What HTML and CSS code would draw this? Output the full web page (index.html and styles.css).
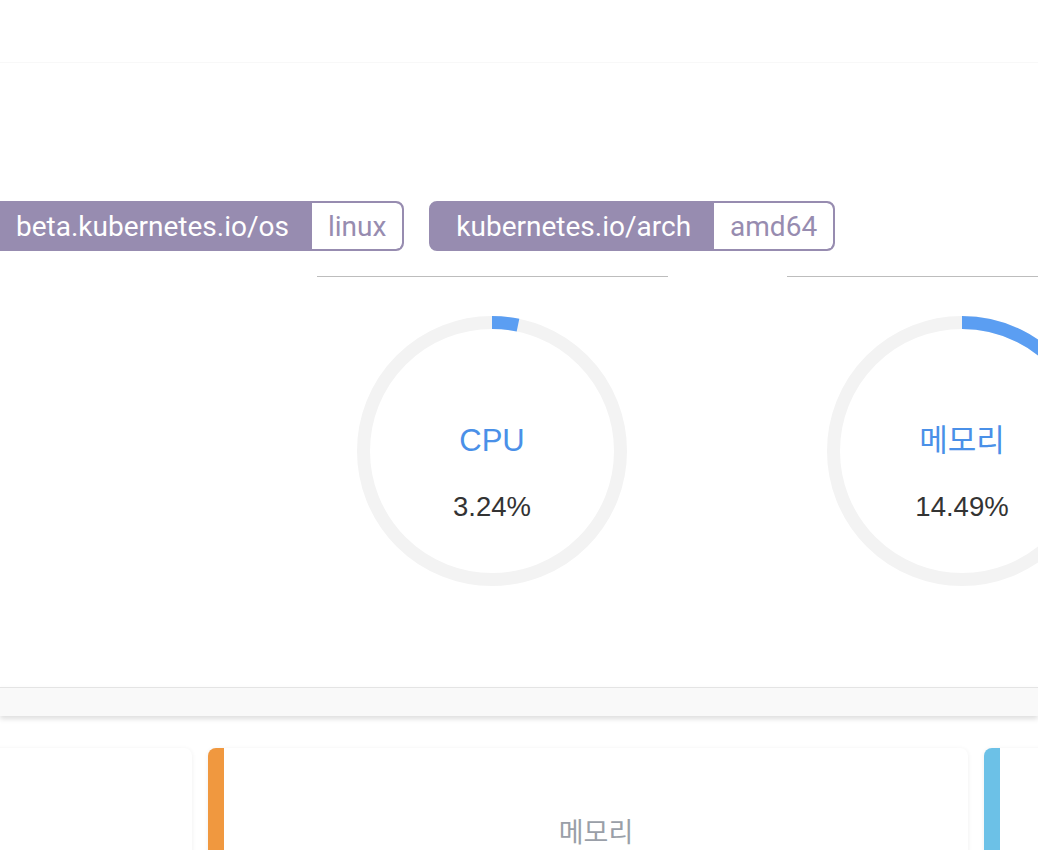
FILE: index.html
```html
<!DOCTYPE html>
<html lang="ko">
<head>
<meta charset="utf-8">
<title>Node</title>
<link rel="stylesheet" href="styles.css">
</head>
<body>
<div class="header"></div>
<main class="main">
  <div class="tags">
    <div class="tag"><span class="tag-key">beta.kubernetes.io/os</span><span class="tag-val">linux</span></div>
    <div class="tag"><span class="tag-key">kubernetes.io/arch</span><span class="tag-val">amd64</span></div>
  </div>
  <div class="metrics">
    <div class="metric">
      <div class="metric-line"></div>
      <div class="gauge">
        <svg class="gauge-svg" width="270" height="270" viewBox="0 0 270 270">
          <circle cx="135" cy="135" r="128.5" fill="none" stroke="#f3f3f3" stroke-width="13"/>
          <circle cx="135" cy="135" r="128.5" fill="none" stroke="#5b9ef2" stroke-width="13" stroke-dasharray="26.2 807.4" transform="rotate(-90 135 135)"/>
        </svg>
        <div class="gauge-text">
          <div class="gauge-label">CPU</div>
          <div class="gauge-value">3.24%</div>
        </div>
      </div>
    </div>
    <div class="metric">
      <div class="metric-line"></div>
      <div class="gauge">
        <svg class="gauge-svg" width="270" height="270" viewBox="0 0 270 270">
          <circle cx="135" cy="135" r="128.5" fill="none" stroke="#f3f3f3" stroke-width="13"/>
          <circle cx="135" cy="135" r="128.5" fill="none" stroke="#5b9ef2" stroke-width="13" stroke-dasharray="117 807.4" transform="rotate(-90 135 135)"/>
        </svg>
        <div class="gauge-text">
          <div class="gauge-label">메모리</div>
          <div class="gauge-value">14.49%</div>
        </div>
      </div>
    </div>
  </div>
</main>
<div class="band"></div>
<div class="cards">
  <div class="card card-green"></div>
  <div class="card card-orange"><div class="card-title">메모리</div></div>
  <div class="card card-blue"></div>
</div>
</body>
</html>
```
FILE: styles.css
```css
html, body {
  margin: 0;
  padding: 0;
  background: #ffffff;
  overflow: hidden;
  width: 1038px;
  height: 850px;
}
body {
  font-family: "Liberation Sans", "Noto Sans CJK KR", sans-serif;
}
.header {
  height: 62px;
  border-bottom: 1px solid #f8f8f8;
}
.main {
  padding-top: 138px;
}
.tags {
  display: flex;
  gap: 25px;
  margin-left: -11px;
}
.tag {
  display: flex;
  height: 46px;
  border: 2px solid #978cb0;
  border-radius: 8px;
  background: #978cb0;
  overflow: hidden;
  font-family: Roboto, "Liberation Sans", sans-serif;
  font-size: 28px;
}
.tag-key {
  display: flex;
  align-items: center;
  padding: 0 23px 0 25px;
  color: #ffffff;
  background: #978cb0;
}
.tag-val {
  display: flex;
  align-items: center;
  padding: 0 16px;
  color: #978cb0;
  background: #ffffff;
  border-radius: 0 6px 6px 0;
}
.metrics {
  display: flex;
  margin-top: 25px;
  padding-left: 257px;
}
.metric {
  flex: 0 0 470px;
  display: flex;
  flex-direction: column;
  align-items: center;
}
.metric-line {
  width: 351px;
  height: 1px;
  background: #bdbdbd;
}
.gauge {
  position: relative;
  width: 270px;
  height: 270px;
  margin-top: 39px;
}
.gauge-svg {
  display: block;
}
.gauge-text {
  position: absolute;
  top: 0;
  left: 0;
  right: 0;
  display: flex;
  flex-direction: column;
  align-items: center;
  padding-top: 107px;
}
.gauge-label {
  font-size: 31px;
  line-height: 36px;
  color: #4a90e8;
}
.gauge-value {
  margin-top: 31px;
  font-size: 27.5px;
  line-height: 34px;
  color: #333333;
}
.band {
  margin-top: 101px;
  height: 28px;
  border-top: 1px solid #e4e4e4;
  background: #f9f9f9;
  box-shadow: 0 3px 5px rgba(0, 0, 0, 0.13);
}
.cards {
  display: flex;
  gap: 16px;
  margin-top: 32px;
  margin-left: -568px;
}
.card {
  flex: 0 0 760px;
  height: 200px;
  background: #ffffff;
  border-radius: 8px;
  box-shadow: 0 1px 5px rgba(0, 0, 0, 0.07);
  box-sizing: border-box;
}
.card-green {
  border-left: 16px solid #5cb85c;
}
.card-orange {
  border-left: 16px solid #f0983f;
  padding-top: 69px;
}
.card-blue {
  border-left: 16px solid #6cc1e7;
}
.card-title {
  text-align: center;
  font-size: 27px;
  line-height: 32px;
  color: #9a9fa8;
}
```
